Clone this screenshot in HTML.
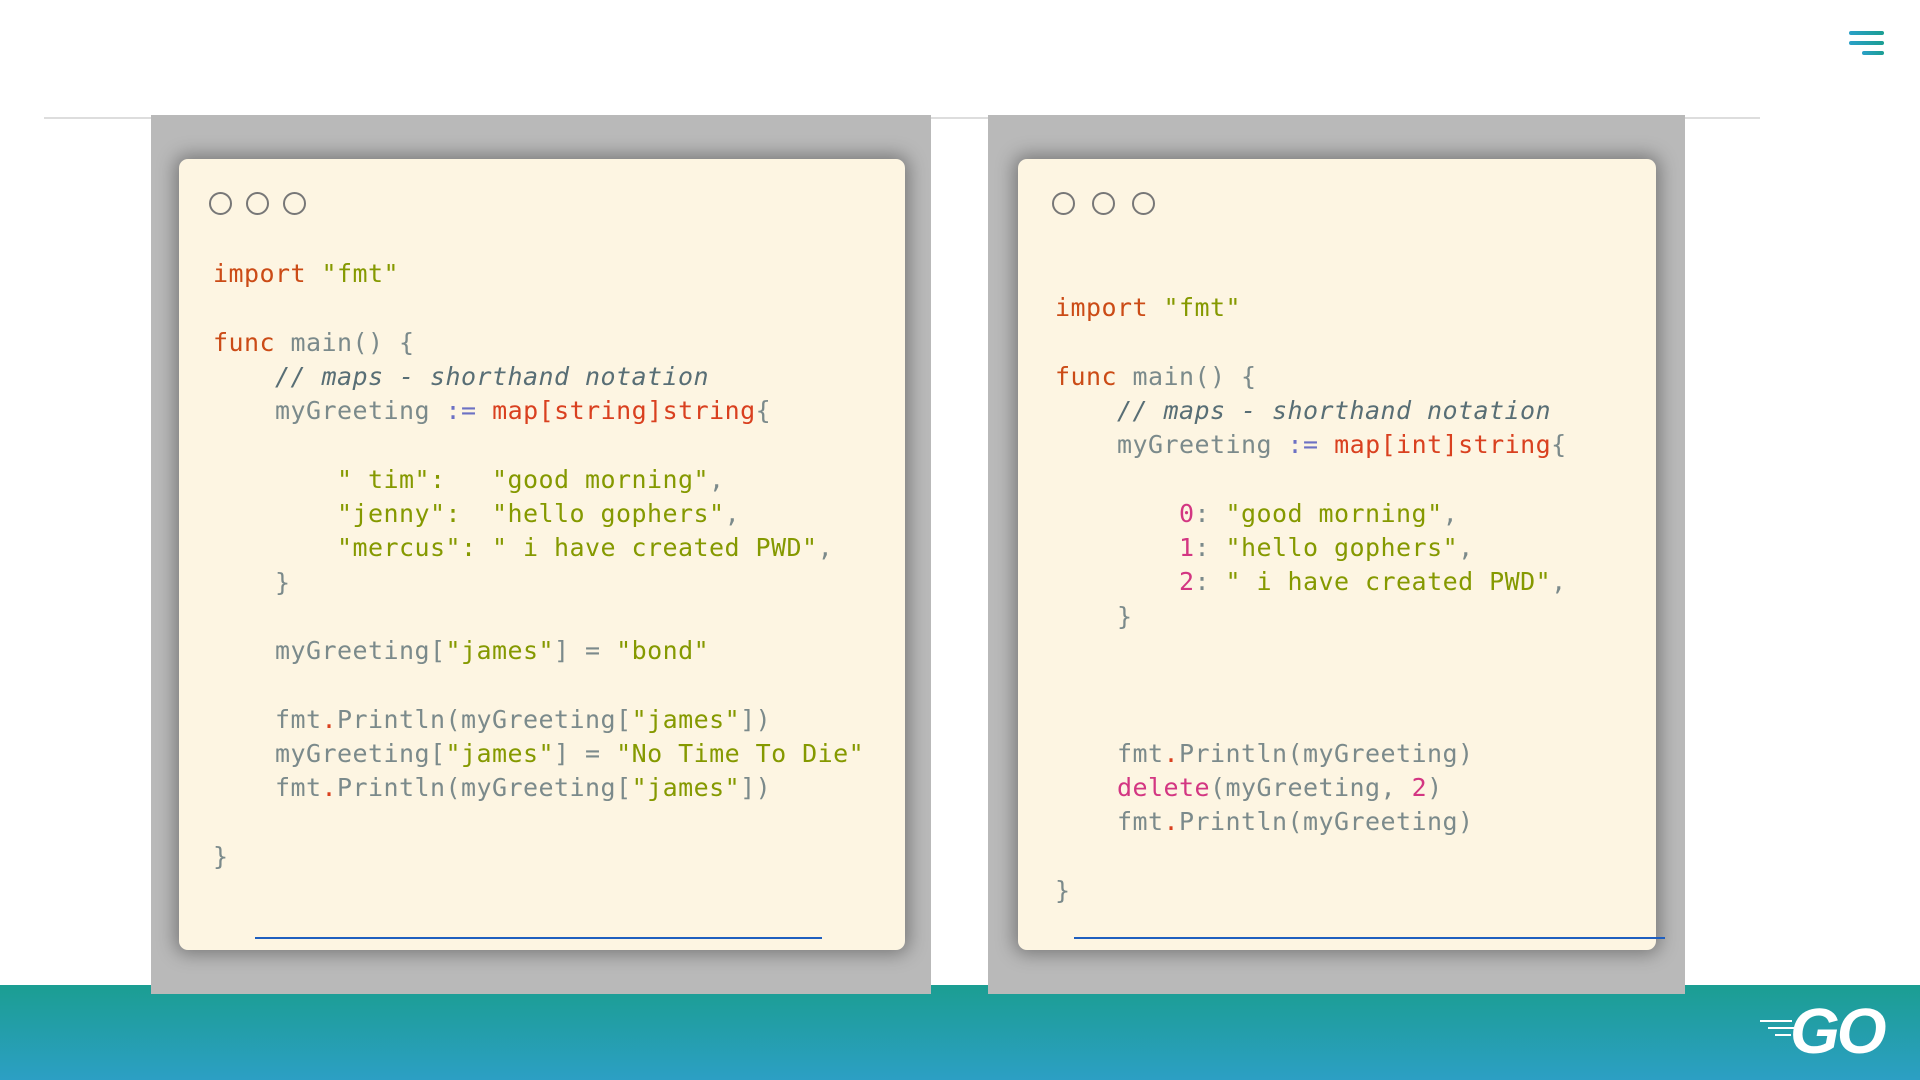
<!DOCTYPE html>
<html><head><meta charset="utf-8"><style>
*{margin:0;padding:0;box-sizing:border-box}
body{width:1920px;height:1080px;background:#fff;position:relative;overflow:hidden;font-family:"DejaVu Sans Mono","Liberation Mono",monospace}
.line{position:absolute;left:44px;width:1716px;top:117px;height:2px;background:#ddd}
.band{position:absolute;left:0;top:985px;width:1920px;height:95px;background:linear-gradient(#1b9e92,#2c9fc4)}
.panel{position:absolute;top:115px;height:879px;background:#b9b9b9}
.card{position:absolute;top:159px;height:791px;background:#fdf5e2;border-radius:9px;box-shadow:0 0 18px 4px rgba(0,0,0,.35)}
.dot{position:absolute;top:192px;width:23px;height:23px;border:2px solid #777;border-radius:50%}
pre{position:absolute;font-family:"DejaVu Sans Mono","Liberation Mono",monospace;font-size:25px;line-height:34.3px;color:#7b8a8b;letter-spacing:0.45px}
.k{color:#cb4b16}.s{color:#859900}.c{color:#586e75;font-style:italic}.o{color:#6c71c4}.r{color:#d9401f}.n{color:#d33682}
.ul{position:absolute;top:937px;height:2px;background:#1f5fbf}
.hb{position:absolute;height:4px;border-radius:2px;background:linear-gradient(90deg,#2aa0c8,#1b9e92)}
</style></head><body>
<div class="line"></div>
<div class="band"></div>
<div class="panel" style="left:151px;width:780px"></div>
<div class="panel" style="left:988px;width:697px"></div>
<div class="card" style="left:179px;width:726px"></div>
<div class="card" style="left:1018px;width:638px"></div>
<div class="dot" style="left:209px"></div><div class="dot" style="left:246px"></div><div class="dot" style="left:283px"></div>
<div class="dot" style="left:1052px"></div><div class="dot" style="left:1092px"></div><div class="dot" style="left:1132px"></div>
<pre style="left:213px;top:257px"><span class="k">import</span> <span class="s">"fmt"</span>

<span class="k">func</span> main() {
    <span class="c">// maps - shorthand notation</span>
    myGreeting <span class="o">:=</span> <span class="r">map[string]string</span>{

        <span class="s">" tim":   "good morning"</span>,
        <span class="s">"jenny":  "hello gophers"</span>,
        <span class="s">"mercus": " i have created PWD"</span>,
    }

    myGreeting[<span class="s">"james"</span>] = <span class="s">"bond"</span>

    fmt<span class="r">.</span>Println(myGreeting[<span class="s">"james"</span>])
    myGreeting[<span class="s">"james"</span>] = <span class="s">"No Time To Die"</span>
    fmt<span class="r">.</span>Println(myGreeting[<span class="s">"james"</span>])

}</pre>
<pre style="left:1055px;top:291px"><span class="k">import</span> <span class="s">"fmt"</span>

<span class="k">func</span> main() {
    <span class="c">// maps - shorthand notation</span>
    myGreeting <span class="o">:=</span> <span class="r">map[int]string</span>{

        <span class="n">0</span>: <span class="s">"good morning"</span>,
        <span class="n">1</span>: <span class="s">"hello gophers"</span>,
        <span class="n">2</span>: <span class="s">" i have created PWD"</span>,
    }



    fmt<span class="r">.</span>Println(myGreeting)
    <span class="n">delete</span>(myGreeting, <span class="n">2</span>)
    fmt<span class="r">.</span>Println(myGreeting)

}</pre>
<div class="ul" style="left:255px;width:567px"></div>
<div class="ul" style="left:1074px;width:591px"></div>
<div class="hb" style="left:1849px;top:31px;width:35px"></div>
<div class="hb" style="left:1849px;top:41px;width:35px"></div>
<div class="hb" style="left:1862px;top:51px;width:22px"></div>
<div style="position:absolute;left:1760px;top:1020px;width:32px;height:2px;background:#fff"></div>
<div style="position:absolute;left:1768px;top:1027px;width:26px;height:2px;background:#fff"></div>
<div style="position:absolute;left:1775px;top:1034px;width:16px;height:2px;background:#fff"></div>
<div style="position:absolute;left:1790px;top:995px;font-family:'Liberation Sans',sans-serif;font-weight:bold;font-style:italic;font-size:64px;color:#fff;letter-spacing:-3px;line-height:72px">GO</div>
</body></html>
